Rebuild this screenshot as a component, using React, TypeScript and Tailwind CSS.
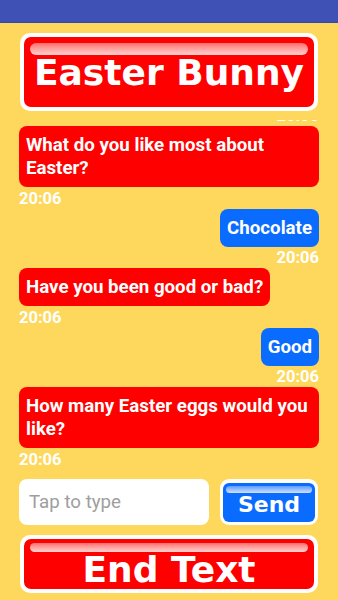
import React from "react";

type Msg = { text: string; mine: boolean; time: string };

const messages: Msg[] = [
  { text: "What do you like most about Easter?", mine: false, time: "20:06" },
  { text: "Chocolate", mine: true, time: "20:06" },
  { text: "Have you been good or bad?", mine: false, time: "20:06" },
  { text: "Good", mine: true, time: "20:06" },
  { text: "How many Easter eggs would you like?", mine: false, time: "20:06" },
];

const roboto = { fontFamily: "Roboto, 'Noto Sans', sans-serif" };
const dejavu = { fontFamily: "'DejaVu Sans', Verdana, sans-serif" };

function Timestamp({ time, right }: { time: string; right: boolean }) {
  return (
    <div
      className={`mt-[1.5px] text-[16.5px] font-bold leading-[20px] text-white ${
        right ? "text-right" : "text-left"
      }`}
    >
      {time}
    </div>
  );
}

function Bubble({ msg }: { msg: Msg }) {
  return (
    <div className={`flex flex-col ${msg.mine ? "items-end" : "items-start"}`}>
      <div
        className={`w-fit max-w-full rounded-lg px-[7px] pt-[8px] pb-[7px] text-[18.7px] font-bold leading-[23px] text-white ${
          msg.mine ? "bg-[#0a6cff]" : "bg-[#ff0000]"
        }`}
      >
        {msg.text}
      </div>
      <div className="w-full">
        <Timestamp time={msg.time} right={msg.mine} />
      </div>
    </div>
  );
}

export default function App() {
  return (
    <div
      className="flex h-[600px] w-full flex-col overflow-hidden bg-[#fdd85d]"
      style={roboto}
    >
      <div className="h-[23px] shrink-0 border-b border-[#3849a8] bg-[#3f51b5]" />

      {/* title button */}
      <div className="mt-[10px] px-[20px]">
        <div className="rounded-[10px] bg-white p-[4px]">
          <div className="flex flex-col rounded-[7px] bg-[#ff0000] px-[6px] pt-[6px] pb-[16px]">
            <div className="h-[12px] rounded-full bg-linear-to-b from-[#ff6e6e] to-[#ffd2d2]" />
            <div
              className="text-center text-[36px] font-bold leading-[36px] text-white"
              style={dejavu}
            >
              Easter Bunny
            </div>
          </div>
        </div>
      </div>

      {/* chat list, scrolled so the previous timestamp peeks in at the top */}
      <div className="mt-[9px] flex min-h-0 flex-1 flex-col overflow-hidden px-[19px]">
        <div className="-mt-[14px]">
          <div className="text-right text-[16.5px] font-bold leading-[20px] text-white">20:06</div>
        </div>
        {messages.map((m, i) => (
          <Bubble key={i} msg={m} />
        ))}
      </div>

      {/* input row */}
      <div className="mt-[9px] flex items-start gap-[11px] px-[19px]">
        <div className="flex h-[46px] w-[190px] items-center rounded-lg bg-white pl-[10px]">
          <input
            placeholder="Tap to type"
            className="w-full bg-transparent text-[18.7px] text-[#333] placeholder:text-[#9e9e9e] outline-none"
            style={roboto}
          />
        </div>
        <div className="h-[46px] w-[98px] rounded-[9px] bg-white p-[3px] pt-[3.5px]">
          <div className="flex h-full flex-col rounded-[6px] bg-[#0a6cff] px-[3px] pt-[3px]">
            <div className="h-[7px] rounded-full bg-linear-to-b from-[#5c9dff] to-[#cfe0ff]" />
            <div
              className="mt-[1px] text-center text-[22px] font-bold leading-[22px] text-white"
              style={dejavu}
            >
              Send
            </div>
          </div>
        </div>
      </div>

      {/* end button */}
      <div className="mt-[10px] px-[20px] pb-[7px]">
        <div className="rounded-[10px] bg-white p-[4px]">
          <div className="flex flex-col rounded-[7px] bg-[#ff0000] px-[6px] pt-[4px] pb-[1px]">
            <div className="h-[9px] rounded-full bg-linear-to-b from-[#ff6e6e] to-[#ffd2d2]" />
            <div
              className="text-center text-[36px] font-bold leading-[36px] text-white"
              style={dejavu}
            >
              End Text
            </div>
          </div>
        </div>
      </div>
    </div>
  );
}
